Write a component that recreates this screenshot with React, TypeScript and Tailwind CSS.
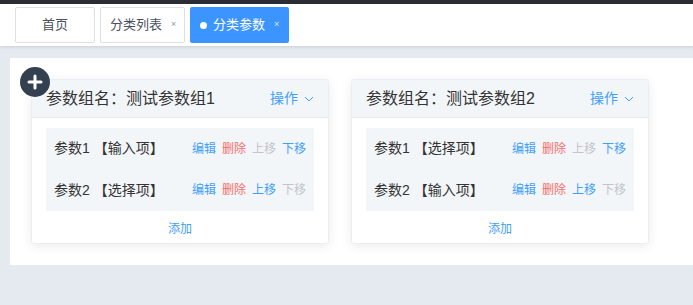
import React from 'react';

const font = { fontFamily: '"Liberation Sans", "Noto Sans CJK SC", sans-serif' };

type Param = { name: string; type: string; up: boolean; down: boolean };

const groups: { title: string; params: Param[] }[] = [
  {
    title: '测试参数组1',
    params: [
      { name: '参数1', type: '输入项', up: false, down: true },
      { name: '参数2', type: '选择项', up: true, down: false },
    ],
  },
  {
    title: '测试参数组2',
    params: [
      { name: '参数1', type: '选择项', up: false, down: true },
      { name: '参数2', type: '输入项', up: true, down: false },
    ],
  },
];

const GroupCard: React.FC<{ title: string; params: Param[] }> = ({ title, params }) => (
  <div className="w-[298px] h-[165px] bg-white border border-[#ebeef5] rounded-[3px] shadow-[0_2px_12px_rgba(0,0,0,0.08)] flex flex-col">
    <div className="h-[38px] flex items-center justify-between px-[14px] bg-[#f3f6f9] border-b border-[#e6e9ee] rounded-t-[3px]">
      <span className="text-[16px] text-[#333]">参数组名：{title}</span>
      <span className="flex items-center gap-[6px] text-[14px] text-[#409eff]">
        操作
        <svg width="10" height="6" viewBox="0 0 10 6" fill="none">
          <path d="M1 1l4 4 4-4" stroke="#409eff" strokeWidth="1" />
        </svg>
      </span>
    </div>
    <div className="px-[14px] pt-[10px]">
      <div className="bg-[#f3f6f9]">
        {params.map((p) => (
          <div key={p.name} className="h-[41.5px] flex items-center justify-between px-[8px]">
            <span className="text-[14px] text-[#333]">
              {p.name} 【{p.type}】
            </span>
            <span className="flex gap-[6px] text-[12px]">
              <span className="text-[#409eff]">编辑</span>
              <span className="text-[#f56c6c]">删除</span>
              <span className={p.up ? 'text-[#409eff]' : 'text-[#c0c4cc]'}>上移</span>
              <span className={p.down ? 'text-[#409eff]' : 'text-[#c0c4cc]'}>下移</span>
            </span>
          </div>
        ))}
      </div>
    </div>
    <div className="flex-1 flex items-center justify-center pt-[3px] text-[12px] text-[#409eff]">添加</div>
  </div>
);

export default function App() {
  return (
    <div className="w-[693px] h-[305px] bg-[#e5eaf1] overflow-hidden" style={font}>
      <div className="h-[4px] bg-[#2b2d35]" />
      <div className="h-[42px] bg-white flex items-center gap-[5px] px-[15px] shadow-[0_1px_3px_rgba(0,0,0,0.12)] relative z-10">
        <div className="w-[80px] h-[36px] border border-[#dcdfe6] rounded-[2px] flex items-center justify-center text-[13px] text-[#495060]">
          首页
        </div>
        <div className="w-[85px] h-[36px] border border-[#dcdfe6] rounded-[2px] flex items-center pl-[9px] text-[13px] text-[#495060]">
          分类列表
          <span className="ml-[9px] text-[9px] text-[#999]">×</span>
        </div>
        <div className="w-[99px] h-[36px] bg-[#3c95ff] rounded-[2px] flex items-center pl-[10px] text-[13px] text-white">
          <span className="w-[7px] h-[7px] rounded-full bg-white mr-[6px]" />
          分类参数
          <span className="ml-[9px] text-[9px] text-[#d6e8ff]">×</span>
        </div>
      </div>
      <div className="pl-[10px] pt-[12px]">
        <div className="relative bg-white h-[207px] pt-[21px] pl-[21px] flex gap-[22px]">
          <div className="absolute left-[10px] top-[9px] w-[30px] h-[30px] rounded-full bg-[#334050] flex items-center justify-center z-10">
            <svg width="16" height="16" viewBox="0 0 16 16">
              <path d="M8 2v12M2 8h12" stroke="white" strokeWidth="3" strokeLinecap="round" />
            </svg>
          </div>
          {groups.map((g) => (
            <GroupCard key={g.title} title={g.title} params={g.params} />
          ))}
        </div>
      </div>
    </div>
  );
}
